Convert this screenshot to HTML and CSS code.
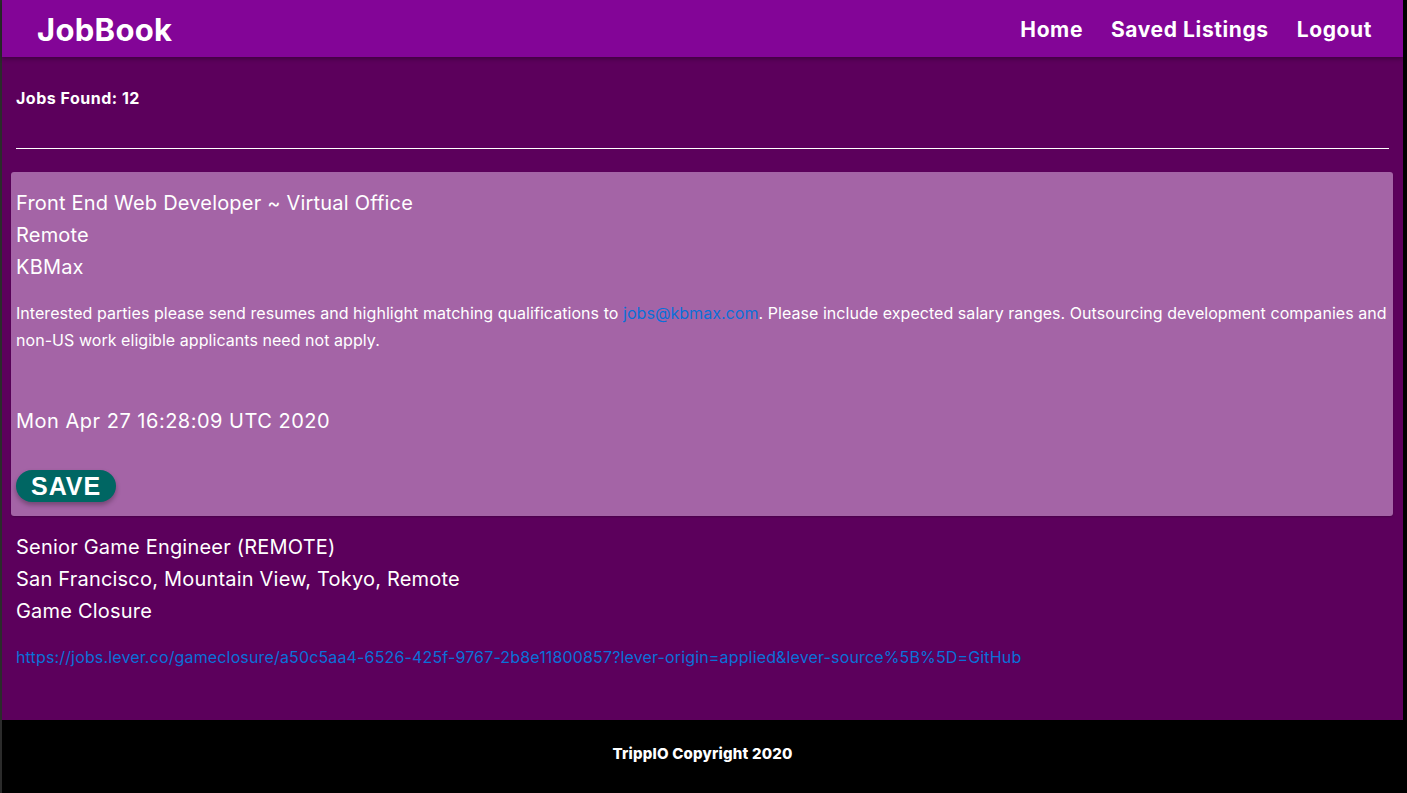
FILE: index.html
```html
<!DOCTYPE html>
<html lang="en">
<head>
  <meta charset="UTF-8">
  <title>JobBook</title>
  <meta name="viewport" content="width=device-width, initial-scale=1.0">
  <link rel="stylesheet" href="styles.css">
</head>
<body>
  <div class="page">
    <nav class="navbar">
      <a href="#" class="brand">JobBook</a>
      <div class="nav-links">
        <a href="#">Home</a>
        <a href="#">Saved Listings</a>
        <a href="#">Logout</a>
      </div>
    </nav>

    <main class="content">
      <div class="jobs-found">Jobs Found: 12</div>
      <hr class="divider">

      <div class="listing listing-open">
        <div class="job-title">Front End Web Developer ~ Virtual Office</div>
        <div class="job-location">Remote</div>
        <div class="job-company">KBMax</div>
        <p class="job-desc">Interested parties please send resumes and highlight matching qualifications to <a href="#">jobs@kbmax.com</a>. Please include expected salary ranges. Outsourcing development companies and non-US work eligible applicants need not apply.</p>
        <div class="job-date">Mon Apr 27 16:28:09 UTC 2020</div>
        <button class="save-button">SAVE</button>
      </div>

      <div class="listing">
        <div class="job-title">Senior Game Engineer (REMOTE)</div>
        <div class="job-location">San Francisco, Mountain View, Tokyo, Remote</div>
        <div class="job-company">Game Closure</div>
        <p class="job-link"><a href="#">https://jobs.lever.co/gameclosure/a50c5aa4-6526-425f-9767-2b8e11800857?lever-origin=applied&amp;lever-source%5B%5D=GitHub</a></p>
      </div>
    </main>

    <footer class="footer">TrippIO Copyright 2020</footer>
  </div>
</body>
</html>
```

FILE: styles.css
```css
body {
  margin: 0;
  font-family: Inter, "Noto Sans", sans-serif;
  background-color: #000;
  color: #fff;
}

.page {
  border-left: 2px solid #2b2b2b;
  border-right: 4px solid #000;
  display: flex;
  flex-direction: column;
  box-sizing: border-box;
  height: 793px;
}

.navbar {
  display: flex;
  align-items: center;
  justify-content: space-between;
  height: 57px;
  box-sizing: border-box;
  padding: 1px 31px 0 35px;
  background-color: #830597;
  box-shadow: 0 2px 4px rgba(0,0,0,0.3);
  position: relative;
  z-index: 1;
}

.brand {
  font-size: 31px;
  font-weight: 700;
  color: #fff;
  text-decoration: none;
  letter-spacing: 0.3px;
}

.nav-links {
  display: flex;
  gap: 28px;
}

.nav-links a {
  font-size: 21px;
  font-weight: 700;
  color: #fff;
  text-decoration: none;
  letter-spacing: 0.6px;
}

.content {
  flex-grow: 1;
  background-color: #5c005c;
  padding: 30px 14px 0 14px;
}

.jobs-found {
  font-size: 16px;
  font-weight: 700;
  letter-spacing: 0.5px;
  margin-top: 1px;
}

.divider {
  border: none;
  border-top: 1px solid #fff;
  margin: 40px 0 23px 0;
}

.listing {
  margin: 0 -4px 0 -5px;
  padding-left: 5px;
}

.listing-open {
  background-color: #a464a6;
  border-radius: 3px;
  padding-top: 15px;
  padding-bottom: 14px;
  margin-bottom: 15px;
  box-shadow: 0 1px 2px rgba(0,0,0,0.2);
}

.job-title,
.job-location,
.job-company {
  font-size: 20px;
  line-height: 32px;
  letter-spacing: 0.2px;
}

.job-desc {
  font-size: 16px;
  line-height: 27px;
  letter-spacing: 0.05px;
  margin: 17px 0 0 0;
}

.job-desc a,
.job-link a {
  color: #0a70d9;
  text-decoration: none;
}

.job-date {
  font-size: 20px;
  letter-spacing: 0.5px;
  margin-top: 55px;
}

.save-button {
  margin-top: 37px;
  background-color: #006663;
  color: #fff;
  border: none;
  border-radius: 16px;
  font-family: "Liberation Sans", Arial, sans-serif;
  font-size: 25px;
  font-weight: 700;
  letter-spacing: 1px;
  height: 32px;
  padding: 0 15px;
  cursor: pointer;
  box-shadow: 0 3px 5px rgba(0,0,0,0.3);
  display: block;
}

.job-link {
  font-size: 16px;
  margin: 20px 0 0 0;
  letter-spacing: 0.15px;
}

.footer {
  height: 73px;
  box-sizing: border-box;
  padding-top: 24px;
  background-color: #000;
  text-align: center;
  font-size: 15px;
  font-weight: 800;
  letter-spacing: 0.2px;
}
```
